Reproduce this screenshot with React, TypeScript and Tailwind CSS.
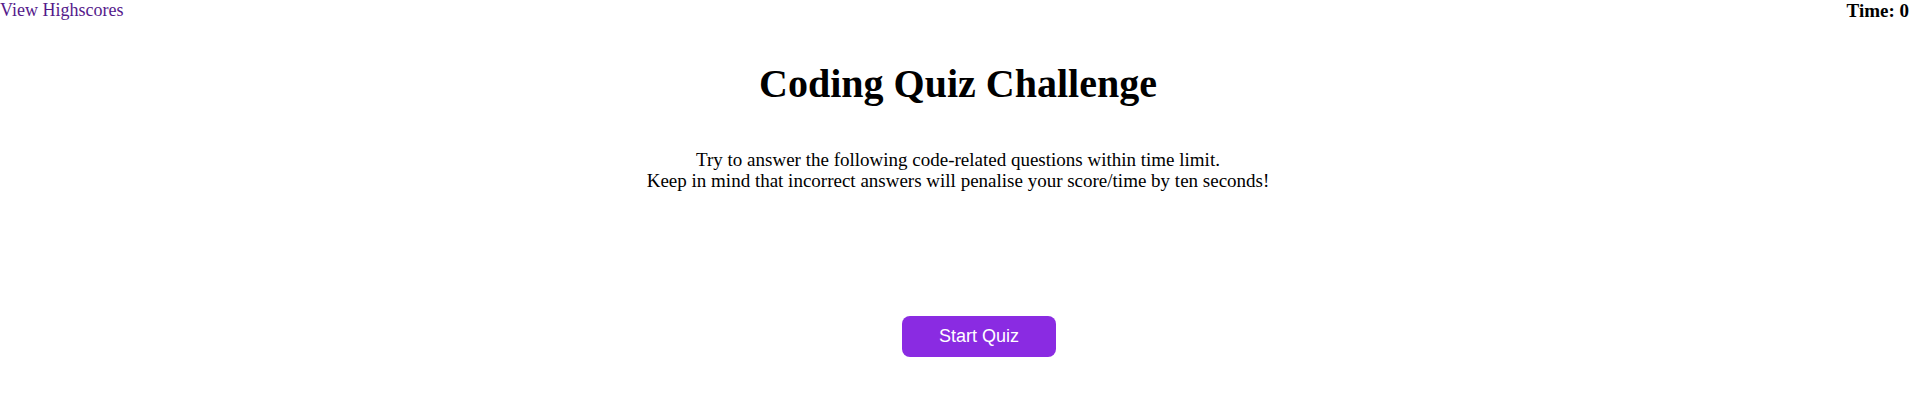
export default function App() {
  return (
    <div className="w-full h-[408px] bg-white text-black" style={{ fontFamily: '"Liberation Serif", "Times New Roman", serif' }}>
      <header className="flex justify-between items-start text-[18px] leading-[21px]">
        <a href="#" className="text-[#551a8b] no-underline">View Highscores</a>
        <div className="font-bold text-[19px] pr-[7px]">Time: 0</div>
      </header>
      <h1 className="mt-[40px] text-center text-[40px] leading-[46px] font-bold">Coding Quiz Challenge</h1>
      <p className="mt-[42px] text-center text-[19px] leading-[21px]">
        Try to answer the following code-related questions within time limit.
        <br />
        Keep in mind that incorrect answers will penalise your score/time by ten seconds!
      </p>
      <div className="mt-[125px] flex justify-center pl-[42px]">
        <button
          className="w-[154px] h-[41px] rounded-[8px] bg-[#8a2be2] text-white text-[18px]"
          style={{ fontFamily: '"Liberation Sans", Arial, sans-serif' }}
        >
          Start Quiz
        </button>
      </div>
    </div>
  );
}
